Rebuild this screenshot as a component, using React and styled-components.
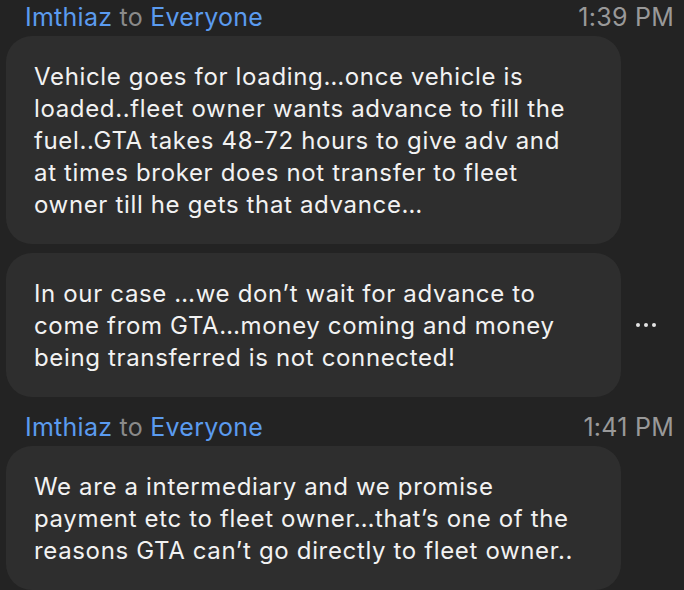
import React from 'react';
import styled, { createGlobalStyle } from 'styled-components';

const GlobalStyle = createGlobalStyle`
    html, body {
        margin: 0;
        background: #232323;
    }
    body {
        font-family: Inter, Roboto, "Liberation Sans", sans-serif;
        -webkit-font-smoothing: antialiased;
    }
`;

const ChatWrapper = styled.div`
    width: 684px;
    height: 590px;
    overflow: hidden;
    padding: 0 10px 0 6px;
    box-sizing: border-box;
    background: #232323;
`;

const Group = styled.section`
    margin-top: ${({ first }) => (first ? '0' : '13px')};
`;

const Header = styled.div`
    display: flex;
    justify-content: space-between;
    align-items: center;
    height: 34px;
    padding-left: 19px;
    margin-bottom: 2px;
    font-size: 25px;
    letter-spacing: 0.25px;
`;

const Sender = styled.span`
    color: #5b9bef;
`;

const To = styled.span`
    color: #8a8a8a;
`;

const Time = styled.span`
    color: #999999;
`;

const Row = styled.div`
    display: flex;
    align-items: center;
    margin-top: ${({ first }) => (first ? '0' : '9px')};
`;

const Bubble = styled.div`
    width: 615px;
    box-sizing: border-box;
    padding: 25px 20px 23px 28px;
    background: #2e2e2e;
    border-radius: 26px;
    color: #f2f2f2;
    font-size: 24px;
    letter-spacing: 0.65px;
    line-height: 32px;
    white-space: nowrap;
`;

const More = styled.div`
    display: flex;
    gap: 4px;
    margin-left: 15px;
`;

const Dot = styled.span`
    width: 4px;
    height: 4px;
    border-radius: 50%;
    background: #e4e4e4;
`;

const Message = ({ lines, first, menu }) => (
    <Row first={first}>
        <Bubble>
            {lines.map((line, i) => (
                <React.Fragment key={i}>
                    {i > 0 && <br />}
                    {line}
                </React.Fragment>
            ))}
        </Bubble>
        {menu && (
            <More>
                <Dot />
                <Dot />
                <Dot />
            </More>
        )}
    </Row>
);

const groups = [
    {
        time: '1:39 PM',
        messages: [
            {
                lines: [
                    'Vehicle goes for loading…once vehicle is',
                    'loaded..fleet owner wants advance to fill the',
                    'fuel..GTA takes 48-72 hours to give adv and',
                    'at times broker does not transfer to fleet',
                    'owner till he gets that advance…',
                ],
            },
            {
                lines: [
                    'In our case …we don’t wait for advance to',
                    'come from GTA…money coming and money',
                    'being transferred is not connected!',
                ],
                menu: true,
            },
        ],
    },
    {
        time: '1:41 PM',
        messages: [
            {
                lines: [
                    'We are a intermediary and we promise',
                    'payment etc to fleet owner…that’s one of the',
                    'reasons GTA can’t go directly to fleet owner..',
                ],
            },
        ],
    },
];

const App = () => {
    return (
        <>
            <GlobalStyle />
            <ChatWrapper>
                {groups.map((group, gi) => (
                    <Group key={gi} first={gi === 0}>
                        <Header>
                            <span>
                                <Sender>Imthiaz</Sender> <To>to</To> <Sender>Everyone</Sender>
                            </span>
                            <Time>{group.time}</Time>
                        </Header>
                        {group.messages.map((msg, mi) => (
                            <Message key={mi} first={mi === 0} lines={msg.lines} menu={msg.menu} />
                        ))}
                    </Group>
                ))}
            </ChatWrapper>
        </>
    );
};

export default App;
